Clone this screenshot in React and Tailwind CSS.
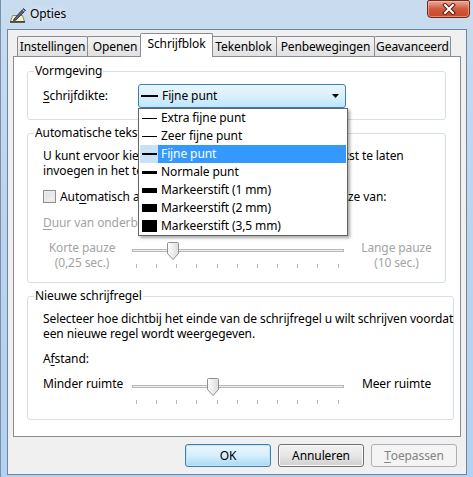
import React from 'react';

const penSizes = [
  { label: 'Extra fijne punt', size: 1 },
  { label: 'Zeer fijne punt', size: 1 },
  { label: 'Fijne punt', size: 2 },
  { label: 'Normale punt', size: 3 },
  { label: 'Markeerstift (1 mm)', size: 5 },
  { label: 'Markeerstift (2 mm)', size: 8 },
  { label: 'Markeerstift (3,5 mm)', size: 12 },
];

const tabs = [
  { label: 'Instellingen', w: 'w-[71px]', ml: '' },
  { label: 'Openen', w: 'w-[56px]', ml: '-ml-[1px]' },
  { label: 'Schrijfblok', w: 'w-[73px]', ml: '-ml-[3px]', active: true },
  { label: 'Tekenblok', w: 'w-[67px]', ml: '-ml-[3px]' },
  { label: 'Penbewegingen', w: 'w-[99px]', ml: '-ml-[1px]' },
  { label: 'Geavanceerd', w: 'w-[77px]', ml: '-ml-[1px]' },
];

function TitleIcon() {
  return (
    <svg width="18" height="16" viewBox="0 0 18 16" className="block">
      <path d="M3.5 8.5 L13.5 8.5 L15.5 14.5 L1.5 14.5 Z" fill="#f6f1c6" stroke="#8c8a70" />
      <line x1="1" y1="15" x2="16" y2="15" stroke="#303030" strokeWidth="1.5" />
      <path d="M5 12 L14.5 1.5 L16.5 3.5 L7 13 L4.5 13.5 Z" fill="#5b6470" stroke="#22272e" strokeWidth="0.8" />
      <line x1="13.5" y1="2.5" x2="15.5" y2="4.5" stroke="#c9d2dc" />
    </svg>
  );
}

function CloseButton() {
  return (
    <div className="w-[43px] h-[18px] rounded-b-[4px] rounded-t-[2px] border border-[#6e2a20] bg-gradient-to-b from-[#e9aa9c] via-[#d15a3d] to-[#c9472a] flex items-center justify-center shadow-[inset_0_0_0_1px_rgba(255,200,180,0.5)]">
      <svg width="14" height="12" viewBox="0 0 14 12">
        <path d="M3 2 L11 10 M11 2 L3 10" stroke="#5a1c12" strokeWidth="4" strokeLinecap="square" />
        <path d="M3 2 L11 10 M11 2 L3 10" stroke="#ffffff" strokeWidth="2" strokeLinecap="square" />
      </svg>
    </div>
  );
}

function Slider({ thumb }) {
  const ticks = Array.from({ length: 11 }, (_, i) => Math.round(10 + i * 20.16) + 0.5);
  const p = thumb + 0.5;
  return (
    <svg width="224" height="30" className="block shrink-0">
      <defs>
        <linearGradient id={`thumb${thumb}`} x1="0" y1="0" x2="1" y2="0">
          <stop offset="0" stopColor="#ffffff" />
          <stop offset="1" stopColor="#dcdcdc" />
        </linearGradient>
      </defs>
      <rect x="6.5" y="9.5" width="211" height="2" fill="#eef0f0" stroke="#b8b8b8" />
      {ticks.map((x) => (
        <line key={x} x1={x} y1="24" x2={x} y2="28" stroke="#b8b8b8" />
      ))}
      <path
        d={`M${p + 1} 2.5 H${p + 10} Q${p + 11} 2.5 ${p + 11} 3.5 V13.5 L${p + 5.5} 19.5 L${p} 13.5 V3.5 Q${p} 2.5 ${p + 1} 2.5 Z`}
        fill={`url(#thumb${thumb})`}
        stroke="#8e8f8f"
      />
    </svg>
  );
}

function PenLine({ size, w = 'w-[15px]' }) {
  return <div className={`${w} bg-black`} style={{ height: size }} />;
}

function Group({ title, children, className = '' }) {
  return (
    <fieldset className={`border border-[#d5dfe5] rounded-[3px] bg-white pl-[15px] ${className}`}>
      <legend className="-ml-[9px] px-[1px] leading-4 text-black">{title}</legend>
      {children}
    </fieldset>
  );
}

export default function App() {
  return (
    <div className="w-[473px] h-[477px] overflow-hidden bg-gradient-to-b from-[#c9dcef] via-[#bcd3ec] to-[#b4d2ef] border-l border-[#7591b2] font-['Noto_Sans',sans-serif] text-[12px] tracking-[-0.1px] text-black select-none">
      {/* title bar */}
      <div className="h-[29px] flex items-start">
        <div className="ml-[8px] mt-[7px]">
          <TitleIcon />
        </div>
        <div className="ml-[3px] mt-[6px] leading-4 text-[12px] text-black [text-shadow:0_0_6px_#ffffff]">Opties</div>
        <div className="flex-1" />
        <div className="mr-[3px]">
          <CloseButton />
        </div>
      </div>

      {/* client area */}
      <div className="ml-[6px] w-[460px] h-[446px] border border-[#6f86a3] bg-[#f0f0f0] flex flex-col">
        {/* tabs */}
        <div className="flex items-end pl-[9px] pt-[3px] h-[26px]">
          {tabs.map((t) =>
            t.active ? (
              <div
                key={t.label}
                className={`${t.w} ${t.ml} h-[24px] -mb-[1px] relative z-10 bg-white border border-b-0 border-[#898c95] rounded-t-[2px] flex items-start justify-center pt-[2px] leading-4`}
              >
                {t.label}
              </div>
            ) : (
              <div
                key={t.label}
                className={`${t.w} ${t.ml} h-[20px] bg-gradient-to-b from-[#f3f3f3] to-[#e1e1e1] border border-b-0 border-[#898c95] rounded-t-[2px] flex items-start justify-center pt-[2px] leading-4`}
              >
                {t.label}
              </div>
            )
          )}
        </div>

        {/* panel */}
        <div className="ml-[5px] w-[448px] h-[381px] bg-white border border-[#898c95] pl-[13px] pt-[6px]">
          <Group title="Vormgeving" className="w-[419px] pb-[11px]">
            <div className="mt-[5px] flex items-center">
              <div className="w-[95px] leading-4">
                <span className="underline underline-offset-2">S</span>chrijfdikte:
              </div>
              <div className="relative">
                <div className="w-[208px] h-[24px] rounded-[3px] border border-[#3c7fb1] bg-gradient-to-b from-[#eaf6fd] via-[#d9f0fc] to-[#bee6fd] flex items-center pl-[2px] pr-[6px]">
                  <PenLine size={2} w="w-[17px]" />
                  <span className="ml-[4px] flex-1 leading-4">Fijne punt</span>
                  <svg width="7" height="4" viewBox="0 0 7 4">
                    <path d="M0 0 H7 L3.5 4 Z" fill="#000" />
                  </svg>
                </div>
                <div className="absolute left-0 top-full z-30 w-[210px] border border-[#646464] bg-white px-[1px] shadow-[2px_2px_3px_rgba(0,0,0,0.35)]">
                  {penSizes.map((s) => {
                    const sel = s.label === 'Fijne punt';
                    return (
                      <div
                        key={s.label}
                        className={`h-[18px] flex items-center ${sel ? 'bg-[#3399ff] text-white' : ''}`}
                      >
                        <div className={`w-[18px] h-[18px] flex items-center justify-center ${sel ? 'bg-[#c9e1f8]' : ''}`}>
                          <PenLine size={s.size} />
                        </div>
                        <span className="ml-[3px] leading-4 whitespace-nowrap">{s.label}</span>
                      </div>
                    );
                  })}
                </div>
              </div>
            </div>
          </Group>

          <Group title="Automatische tekstinvoeging" className="w-[419px] mt-[5px] pb-[12px]">
            <p className="mt-[7px] leading-[15px] whitespace-nowrap">
              U kunt ervoor kiezen om geschreven tekst direct als tekst te laten
              <br />
              invoegen in het tekstvak na een pauze.
            </p>
            <div className="mt-[11px] flex items-center h-[15px]">
              <div className="w-[13px] h-[13px] border border-[#8f8f8f] bg-gradient-to-br from-[#dcdcdc] to-[#f6f6f6] shadow-[inset_0_0_0_2px_#eaeaea]" />
              <span className="ml-[4px] leading-[15px] whitespace-nowrap">
                Aut<span className="underline underline-offset-2">o</span>matisch afmaken en tekst invoegen na een pauze van:
              </span>
            </div>
            <div className="mt-[11px] leading-[15px] text-[#a3a3a3]">
              <span className="underline underline-offset-2">D</span>uur van onderbreking:
            </div>
            <div className="mt-[10px] flex items-start">
              <div className="w-[78px] text-center leading-[15px] whitespace-nowrap text-[#a3a3a3]">
                Korte pauze
                <br />
                (0,25 sec.)
              </div>
              <div className="ml-[5px]">
                <Slider thumb={41} />
              </div>
              <div className="w-[93px] text-center leading-[15px] whitespace-nowrap text-[#a3a3a3]">
                Lange pauze
                <br />
                (10 sec.)
              </div>
            </div>
          </Group>

          <Group title="Nieuwe schrijfregel" className="w-[419px] mt-[5px] pb-[13px]">
            <p className="mt-[7px] leading-[15px] whitespace-nowrap">
              Selecteer hoe dichtbij het einde van de schrijfregel u wilt schrijven voordat
              <br />
              een nieuwe regel wordt weergegeven.
            </p>
            <div className="mt-[10px] leading-[15px]">
              A<span className="underline underline-offset-2">f</span>stand:
            </div>
            <div className="mt-[10px] flex items-start">
              <div className="w-[78px] text-center leading-[15px] whitespace-nowrap">Minder ruimte</div>
              <div className="ml-[5px]">
                <Slider thumb={81} />
              </div>
              <div className="w-[93px] text-center leading-[15px] whitespace-nowrap">Meer ruimte</div>
            </div>
          </Group>
        </div>

        {/* buttons */}
        <div className="mt-[7px] flex justify-end gap-[7px] pr-[9px]">
          <div className="w-[86px] h-[23px] rounded-[3px] border border-[#3c7fb1] bg-gradient-to-b from-[#eaf6fd] via-[#d6effc] to-[#a7d9f5] shadow-[inset_0_0_0_1px_#c1e4f7] flex items-center justify-center leading-4">
            OK
          </div>
          <div className="w-[86px] h-[23px] rounded-[3px] border border-[#707070] bg-gradient-to-b from-[#f2f2f2] via-[#e6e6e6] to-[#cfcfcf] shadow-[inset_0_0_0_1px_#fafafa] flex items-center justify-center leading-4">
            Annuleren
          </div>
          <div className="w-[86px] h-[23px] rounded-[3px] border border-[#adb2b5] bg-[#f4f4f4] flex items-center justify-center leading-4 text-[#838383]">
            <span className="underline underline-offset-2">T</span>oepassen
          </div>
        </div>
      </div>
    </div>
  );
}
